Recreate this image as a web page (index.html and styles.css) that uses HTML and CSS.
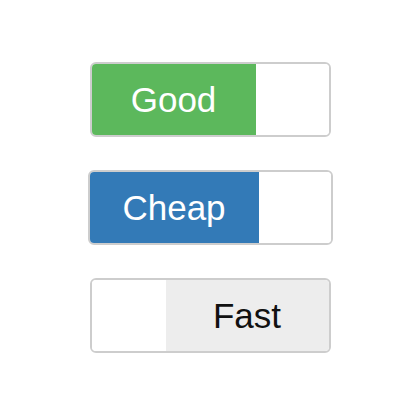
FILE: index.html
```html
<!DOCTYPE html>
<html>
<head>
<meta charset="utf-8">
<link rel="stylesheet" href="styles.css">
</head>
<body>
<div class="stack">
  <div class="toggle t1">
    <div class="label on-green">Good</div>
    <div class="handle"></div>
  </div>
  <div class="toggle t2">
    <div class="label on-blue">Cheap</div>
    <div class="handle"></div>
  </div>
  <div class="toggle t3">
    <div class="handle"></div>
    <div class="label off">Fast</div>
  </div>
</div>
</body>
</html>
```
FILE: styles.css
```css
html, body {
  margin: 0;
  padding: 0;
  background: #fff;
}
.stack {
  display: flex;
  flex-direction: column;
  align-items: center;
  padding-top: 62px;
  gap: 33px;
  font-family: "Liberation Sans", Arial, sans-serif;
}
.toggle {
  display: flex;
  height: 75px;
  box-sizing: border-box;
  border: 2px solid #cdcdcd;
  border-radius: 6px;
  overflow: hidden;
  background: #fff;
}
.t1 { width: 241px; }
.t2 { width: 245px; }
.t3 { width: 241px; }
.label {
  display: flex;
  align-items: center;
  justify-content: center;
  font-size: 35px;
  flex: 1;
}
.on-green {
  background: #5cb85c;
  color: #fff;
}
.on-blue {
  background: #337ab7;
  color: #fff;
}
.off {
  background: #ededed;
  color: #111;
}
.t1 .handle { width: 73px; }
.t2 .handle { width: 72px; }
.t3 .handle { width: 74px; }
.handle {
  background: #fff;
  flex: none;
}
```
